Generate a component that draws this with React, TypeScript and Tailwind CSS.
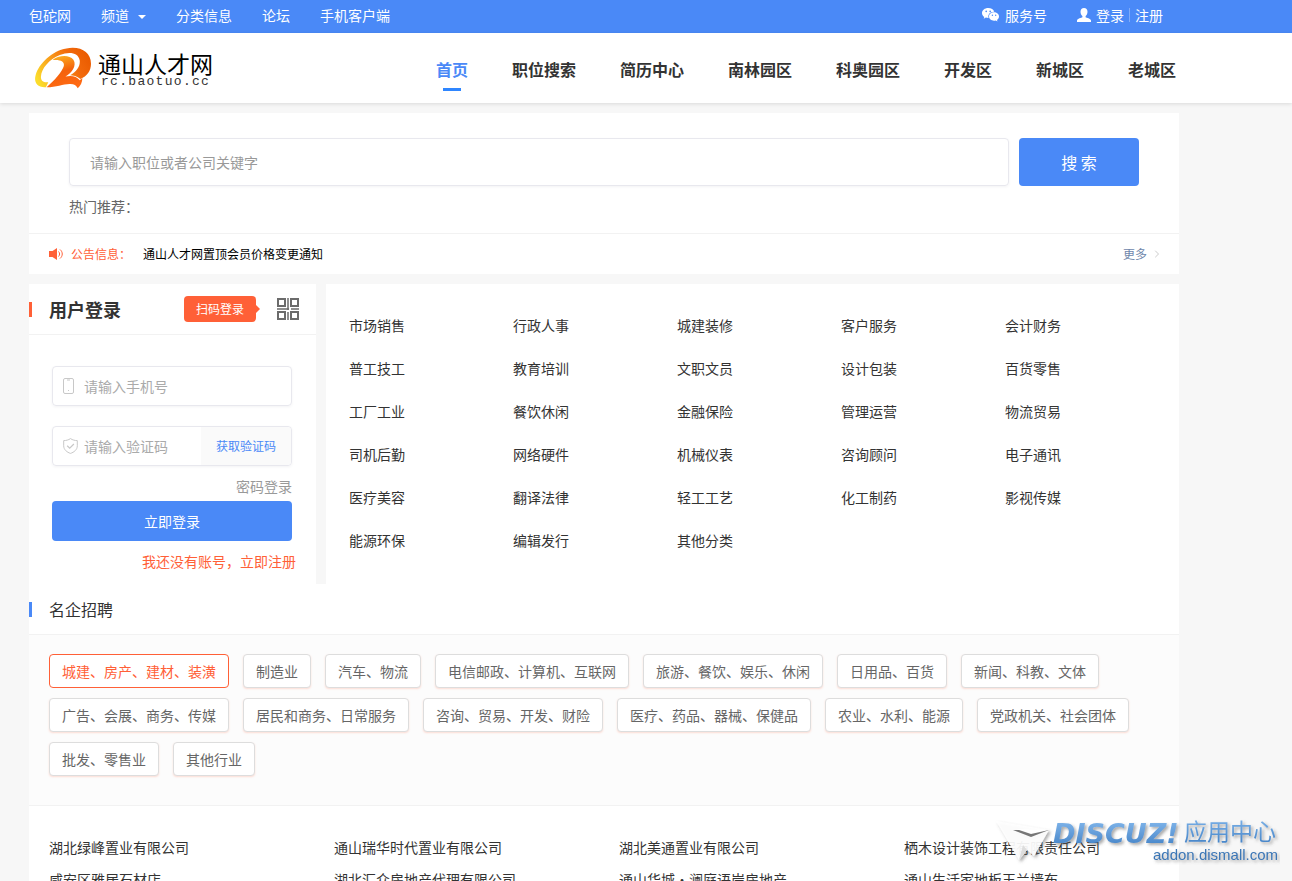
import { useState } from "react";
import { ChevronRight } from "lucide-react";

const navItems = ["首页", "职位搜索", "简历中心", "南林园区", "科奥园区", "开发区", "新城区", "老城区"];

const categories = [
  "市场销售", "行政人事", "城建装修", "客户服务", "会计财务",
  "普工技工", "教育培训", "文职文员", "设计包装", "百货零售",
  "工厂工业", "餐饮休闲", "金融保险", "管理运营", "物流贸易",
  "司机后勤", "网络硬件", "机械仪表", "咨询顾问", "电子通讯",
  "医疗美容", "翻译法律", "轻工工艺", "化工制药", "影视传媒",
  "能源环保", "编辑发行", "其他分类",
];

const industries = [
  "城建、房产、建材、装潢", "制造业", "汽车、物流", "电信邮政、计算机、互联网",
  "旅游、餐饮、娱乐、休闲", "日用品、百货", "新闻、科教、文体",
  "广告、会展、商务、传媒", "居民和商务、日常服务", "咨询、贸易、开发、财险",
  "医疗、药品、器械、保健品", "农业、水利、能源", "党政机关、社会团体",
  "批发、零售业", "其他行业",
];

const companies = [
  "湖北绿峰置业有限公司", "通山瑞华时代置业有限公司", "湖北美通置业有限公司", "栖木设计装饰工程有限责任公司",
  "咸安区雅居石材店", "湖北汇众房地产代理有限公司", "通山华城•澜庭语岸房地产", "通山生活家地板玉兰墙布",
];

function WechatIcon() {
  return (
    <svg viewBox="0 0 17 14" className="h-[14px] w-[17px]" aria-hidden="true">
      <path fill="#fff" d="M6.2 0C2.8 0 0 2.2 0 5c0 1.6.9 3 2.3 3.9L1.7 10.800l2.200-1.200c.7.2 1.500.3 2.300.3h.4C5.500 6.500 8.200 3.700 11.900 3.700h.4C11.700 1.500 9.200 0 6.200 0z" />
      <path fill="#fff" d="M17 8.500c0-2.300-2.300-4.200-5-4.200s-5 1.900-5 4.200 2.300 4.200 5 4.200c.6 0 1.200-.1 1.700-.3l1.800 1.100-.5-1.600c1.200-.8 2-2 2-3.400z" />
      <g fill="#4a89f7">
        <circle cx="4.200" cy="3.400" r=".8" />
        <circle cx="8.200" cy="3.400" r=".8" />
        <circle cx="10.400" cy="7.300" r=".7" />
        <circle cx="13.700" cy="7.300" r=".7" />
      </g>
    </svg>
  );
}

function UserIcon() {
  return (
    <svg viewBox="0 0 14 14" className="h-[14px] w-[14px]" aria-hidden="true">
      <path fill="#fff" d="M7 0C4.800 0 3.500 1.500 3.500 3.700c0 1.700.7 3.500 1.900 4.300v1.200C4.500 9.700.3 10.500 0 12.500c-.1.900 0 1.500 0 1.500h14s.1-.6 0-1.500c-.3-2-4.500-2.800-5.400-3.300V8c1.200-.8 1.900-2.600 1.900-4.300C10.500 1.500 9.200 0 7 0z" />
    </svg>
  );
}

function LogoMark() {
  return (
    <svg viewBox="15 20 172 124" className="h-[42px] w-[57px]" aria-hidden="true">
      <defs>
        <linearGradient id="ring" x1="0" y1="0.7" x2="1" y2="0.3">
          <stop offset="0" stopColor="#fbdc2c" />
          <stop offset="0.35" stopColor="#f9a11b" />
          <stop offset="0.7" stopColor="#f26a0c" />
          <stop offset="1" stopColor="#ea5b00" />
        </linearGradient>
        <linearGradient id="two" x1="0.2" y1="0" x2="0.5" y2="1">
          <stop offset="0" stopColor="#fcb522" />
          <stop offset="0.5" stopColor="#f4620c" />
          <stop offset="1" stopColor="#ff6a13" />
        </linearGradient>
      </defs>
      <path fill="url(#ring)" d="M48 140C20 142 11 124 17 103C26 70 66 30 110 23C152 15 184 34 184 69C184 90 172 107 152 115C142 107 130 104 121 104C140 92 152 78 150 59C146 36 119 31 90 43C58 56 34 84 33 108C32 120 40 127 55 125Z" />
      <path fill="url(#two)" d="M68 58C84 44 118 40 131 57C142 75 126 96 107 108C124 103 141 107 150 119L158 112C158 125 152 136 144 143C140 134 133 130 122 130C102 129 80 140 50 140C74 120 98 91 102 76C105 62 92 56 68 58Z" />
    </svg>
  );
}

function SpeakerIcon() {
  return (
    <svg viewBox="0 0 14 12" className="h-3 w-[14px]" aria-hidden="true">
      <path fill="#ff6037" d="M0 3h3.500L8 0v12L3.500 9H0z" />
      <path fill="none" stroke="#ff6037" d="M9.500 3.500c1.500 1.500 1.500 3.500 0 5M11 1.500c3 2.500 3 6.500 0 9" />
    </svg>
  );
}

function QrIcon() {
  return (
    <svg viewBox="0 0 22 22" className="h-[22px] w-[22px]" fill="none" stroke="#6b6b6b" strokeWidth="2" aria-hidden="true">
      <path d="M1 1h7v7H1zM14 1h7v7h-7zM1 14h7v7H1zM14 14h7v7h-7z" />
      <path d="M11 0v12M0 11h12M14 11h8M11 14v8" strokeWidth="1.500" />
    </svg>
  );
}

function PhoneIcon() {
  return (
    <svg viewBox="0 0 11 16" className="h-4 w-[11px]" fill="none" stroke="#c8c8c8" aria-hidden="true">
      <rect x=".5" y=".5" width="10" height="15" rx="1.500" />
      <path d="M4 2h3M5 12.500h1" strokeWidth="1.200" />
    </svg>
  );
}

function ShieldIcon() {
  return (
    <svg viewBox="0 0 15 16" className="h-4 w-[15px]" fill="none" stroke="#c8c8c8" aria-hidden="true">
      <path d="M7.500.6C5.500 2 3 2.600.7 2.600v5.200c0 4 3.300 6.400 6.800 7.600 3.500-1.200 6.800-3.600 6.800-7.600V2.600C12 2.600 9.500 2 7.500.6z" />
      <path d="M4.200 7.800l2.500 2.400 4.200-4.200" strokeWidth="1.200" />
    </svg>
  );
}

function Watermark() {
  return (
    <div className="pointer-events-none fixed right-3 bottom-2">
      <svg viewBox="0 0 290 62" className="h-[62px] w-[290px]" role="img" aria-label="DISCUZ! 应用中心">
        <defs>
          <linearGradient id="sky" x1="0" y1="0" x2="0" y2="1">
            <stop offset="0" stopColor="#86baee" />
            <stop offset="1" stopColor="#3f7fc4" />
          </linearGradient>
          <filter id="soft" x="-10%" y="-20%" width="120%" height="150%">
            <feDropShadow dx="2" dy="2" stdDeviation="1.500" floodColor="#555" floodOpacity="0.5" />
          </filter>
        </defs>
        <g filter="url(#soft)">
          <path d="M6 10L59 19L44 45L37 39L29 49Z" fill="#fff" fillOpacity="0.9" />
          <path d="M23 19L59 19L41 26Z" fill="#777" />
          <path d="M26 18L59 19L41 23Z" fill="#fff" />
          <path d="M29 49L33 34L37 39Z" fill="#ddd" />
          <text x="63" y="32" fill="url(#sky)" fontSize="27" fontWeight="700" fontStyle="italic" fontFamily="DejaVu Sans, sans-serif">DISCUZ!</text>
          <text x="194" y="29" fill="url(#sky)" fontSize="23" fontFamily="Noto Sans CJK SC, sans-serif">应用中心</text>
          <text x="163" y="49" fill="#3b76b5" fontSize="15" fontFamily="Liberation Sans, sans-serif">addon.dismall.com</text>
        </g>
      </svg>
    </div>
  );
}

function TopBar() {
  return (
    <div className="bg-[#4a89f7] text-sm text-white">
      <div className="ml-[29px] flex h-[33px] max-w-[1150px] items-center justify-between pr-4 pb-[3px]">
        <div className="flex items-center gap-[30px]">
          <a href="#">包砣网</a>
          <a href="#" className="flex items-center gap-[9px]">
            频道
            <svg viewBox="0 0 8 4" className="mt-1 h-1 w-2" aria-hidden="true"><path fill="#fff" d="M0 0h8L4 4z" /></svg>
          </a>
          <a href="#">分类信息</a>
          <a href="#">论坛</a>
          <a href="#">手机客户端</a>
        </div>
        <div className="flex items-center gap-[30px]">
          <a href="#" className="flex items-center gap-[6px]"><WechatIcon />服务号</a>
          <div className="flex items-center gap-[5px]">
            <UserIcon />
            <a href="#">登录</a>
            <span className="h-[14px] w-px bg-[#7fabf9]" />
            <a href="#">注册</a>
          </div>
        </div>
      </div>
    </div>
  );
}

function Header() {
  return (
    <header className="bg-white shadow-[0_1px_4px_rgba(0,0,0,0.12)]">
      <div className="ml-[29px] flex h-[70px] max-w-[1150px] items-center justify-between pr-[3px] pl-[6px]">
        <a href="#" className="flex items-center gap-[6px]">
          <LogoMark />
          <span className="flex flex-col text-black">
            <span className="text-[23px] leading-7">通山人才网</span>
            <span className="pl-[3px] font-['Liberation_Mono',monospace] text-[13px] leading-[10px] tracking-widest text-[#333]">rc.baotuo.cc</span>
          </span>
        </a>
        <nav className="flex h-full gap-11 font-bold">
          {navItems.map((item, i) => (
            <a key={item} href="#" className={i === 0 ? "flex flex-col items-center pt-6 text-[#4a89f7]" : "pt-6 text-[#333]"}>
              {item}
              {i === 0 && <span className="mt-[7px] h-[3px] w-[18px] bg-[#2f86ff]" />}
            </a>
          ))}
        </nav>
      </div>
    </header>
  );
}

function SearchPanel() {
  return (
    <section className="bg-white">
      <form className="px-10 pt-[25px] pb-4" onSubmit={(e) => e.preventDefault()}>
        <div className="flex gap-[10px]">
          <input
            type="text"
            aria-label="关键字"
            placeholder="请输入职位或者公司关键字"
            className="h-12 min-w-0 flex-1 rounded border border-[#e8e8ee] px-5 text-sm shadow-[0_1px_3px_rgba(0,0,50,0.05)] outline-none placeholder:text-[#999]"
          />
          <button type="submit" className="h-12 w-[120px] rounded bg-[#4a89f7] text-base text-white">搜 索</button>
        </div>
        <p className="mt-[9px] text-sm leading-[22px] text-[#666]">热门推荐：</p>
      </form>
      <div className="flex h-[41px] items-center border-t border-[#f2f2f2] pr-4 pl-5 text-xs">
        <SpeakerIcon />
        <span className="ml-2 text-[#ff6037]">公告信息：</span>
        <a href="#" className="ml-3 text-black">通山人才网置顶会员价格变更通知</a>
        <a href="#" className="ml-auto flex items-center gap-1 text-[#6f87ab]">
          更多
          <ChevronRight size={12} className="text-[#ccc]" />
        </a>
      </div>
    </section>
  );
}

function LoginPanel() {
  const [phone, setPhone] = useState("");
  const [code, setCode] = useState("");

  return (
    <section className="h-[300px] w-[287px] shrink-0 bg-white">
      <div className="flex h-[51px] items-center border-b border-[#f2f2f2] pr-[17px]">
        <span className="h-[15px] w-[3px] bg-[#ff6037]" />
        <h2 className="ml-[17px] text-lg font-bold text-[#333]">用户登录</h2>
        <div className="ml-auto flex items-center">
          <span className="h-[26px] w-[72px] rounded-sm bg-[#ff6037] text-center text-xs leading-[26px] text-white">扫码登录</span>
          <svg viewBox="0 0 4 8" className="h-2 w-1" aria-hidden="true"><path fill="#ff6037" d="M0 0l4 4-4 4z" /></svg>
          <button type="button" aria-label="扫码登录" className="ml-[17px]"><QrIcon /></button>
        </div>
      </div>
      <form className="pt-[31px] pr-6 pl-[23px] text-sm" onSubmit={(e) => e.preventDefault()}>
        <div className="flex h-10 items-center gap-[10px] rounded border border-[#e8e8ee] px-[10px] shadow-[0_1px_3px_rgba(0,0,50,0.05)]">
          <PhoneIcon />
          <input type="tel" aria-label="手机号" value={phone} onChange={(e) => setPhone(e.target.value)} placeholder="请输入手机号" className="min-w-0 flex-1 outline-none placeholder:text-[#aaa]" />
        </div>
        <div className="mt-5 flex h-10 items-center gap-[6px] rounded border border-[#e8e8ee] pl-[10px] shadow-[0_1px_3px_rgba(0,0,50,0.05)]">
          <ShieldIcon />
          <input type="text" aria-label="验证码" value={code} onChange={(e) => setCode(e.target.value)} placeholder="请输入验证码" className="min-w-0 flex-1 outline-none placeholder:text-[#aaa]" />
          <button type="button" className="h-full w-[90px] rounded-r bg-[#fafafa] text-xs text-[#4a89f7]">获取验证码</button>
        </div>
        <a href="#" className="mt-[9px] block text-right leading-[22px] text-[#999]">密码登录</a>
        <button type="submit" className="mt-1 h-10 w-full rounded bg-[#4a89f7] text-white">立即登录</button>
      </form>
      <a href="#" className="mt-[9px] block pr-5 text-right text-sm leading-[22px] text-[#ff6037]">我还没有账号，立即注册</a>
    </section>
  );
}

function Recruiters() {
  const [active, setActive] = useState(0);

  return (
    <section className="bg-white">
      <div className="flex h-[51px] items-center border-b border-[#f2f2f2]">
        <span className="h-[15px] w-[3px] bg-[#4a89f7]" />
        <h2 className="ml-[17px] text-base text-[#333]">名企招聘</h2>
      </div>
      <div className="flex flex-wrap gap-x-[14px] gap-y-[10px] border-b border-[#f2f2f2] bg-[#fcfcfc] px-5 pt-[19px] pb-[29px]">
        {industries.map((item, i) => (
          <button
            key={item}
            type="button"
            onClick={() => setActive(i)}
            className={
              i === active
                ? "h-[34px] rounded border border-[#ff6037] bg-white px-3 text-sm text-[#ff6037]"
                : "h-[34px] rounded border border-[#ddd] bg-white px-3 text-sm text-[#666] shadow-[0_1px_2px_rgba(255,96,55,0.2)]"
            }
          >
            {item}
          </button>
        ))}
      </div>
      <div className="grid grid-cols-4 gap-x-[10px] pt-[25px] pl-5 text-sm leading-8 text-[#333]">
        {companies.map((item) => (
          <a key={item} href="#" className="truncate">{item}</a>
        ))}
      </div>
    </section>
  );
}

export default function App() {
  return (
    <div className="min-h-screen bg-[#f7f7f7] font-['Noto_Sans_CJK_SC',sans-serif]">
      <TopBar />
      <Header />
      <main className="ml-[29px] max-w-[1150px] pt-[10px]">
        <SearchPanel />
        <div className="mt-[10px] flex gap-[10px]">
          <LoginPanel />
          <section className="flex-1 bg-white pt-5 pr-[10px] pl-[23px]">
            <div className="grid grid-cols-5 text-sm leading-[43px] text-[#333]">
              {categories.map((item) => (
                <a key={item} href="#">{item}</a>
              ))}
            </div>
          </section>
        </div>
        <Recruiters />
      </main>
      <Watermark />
    </div>
  );
}
